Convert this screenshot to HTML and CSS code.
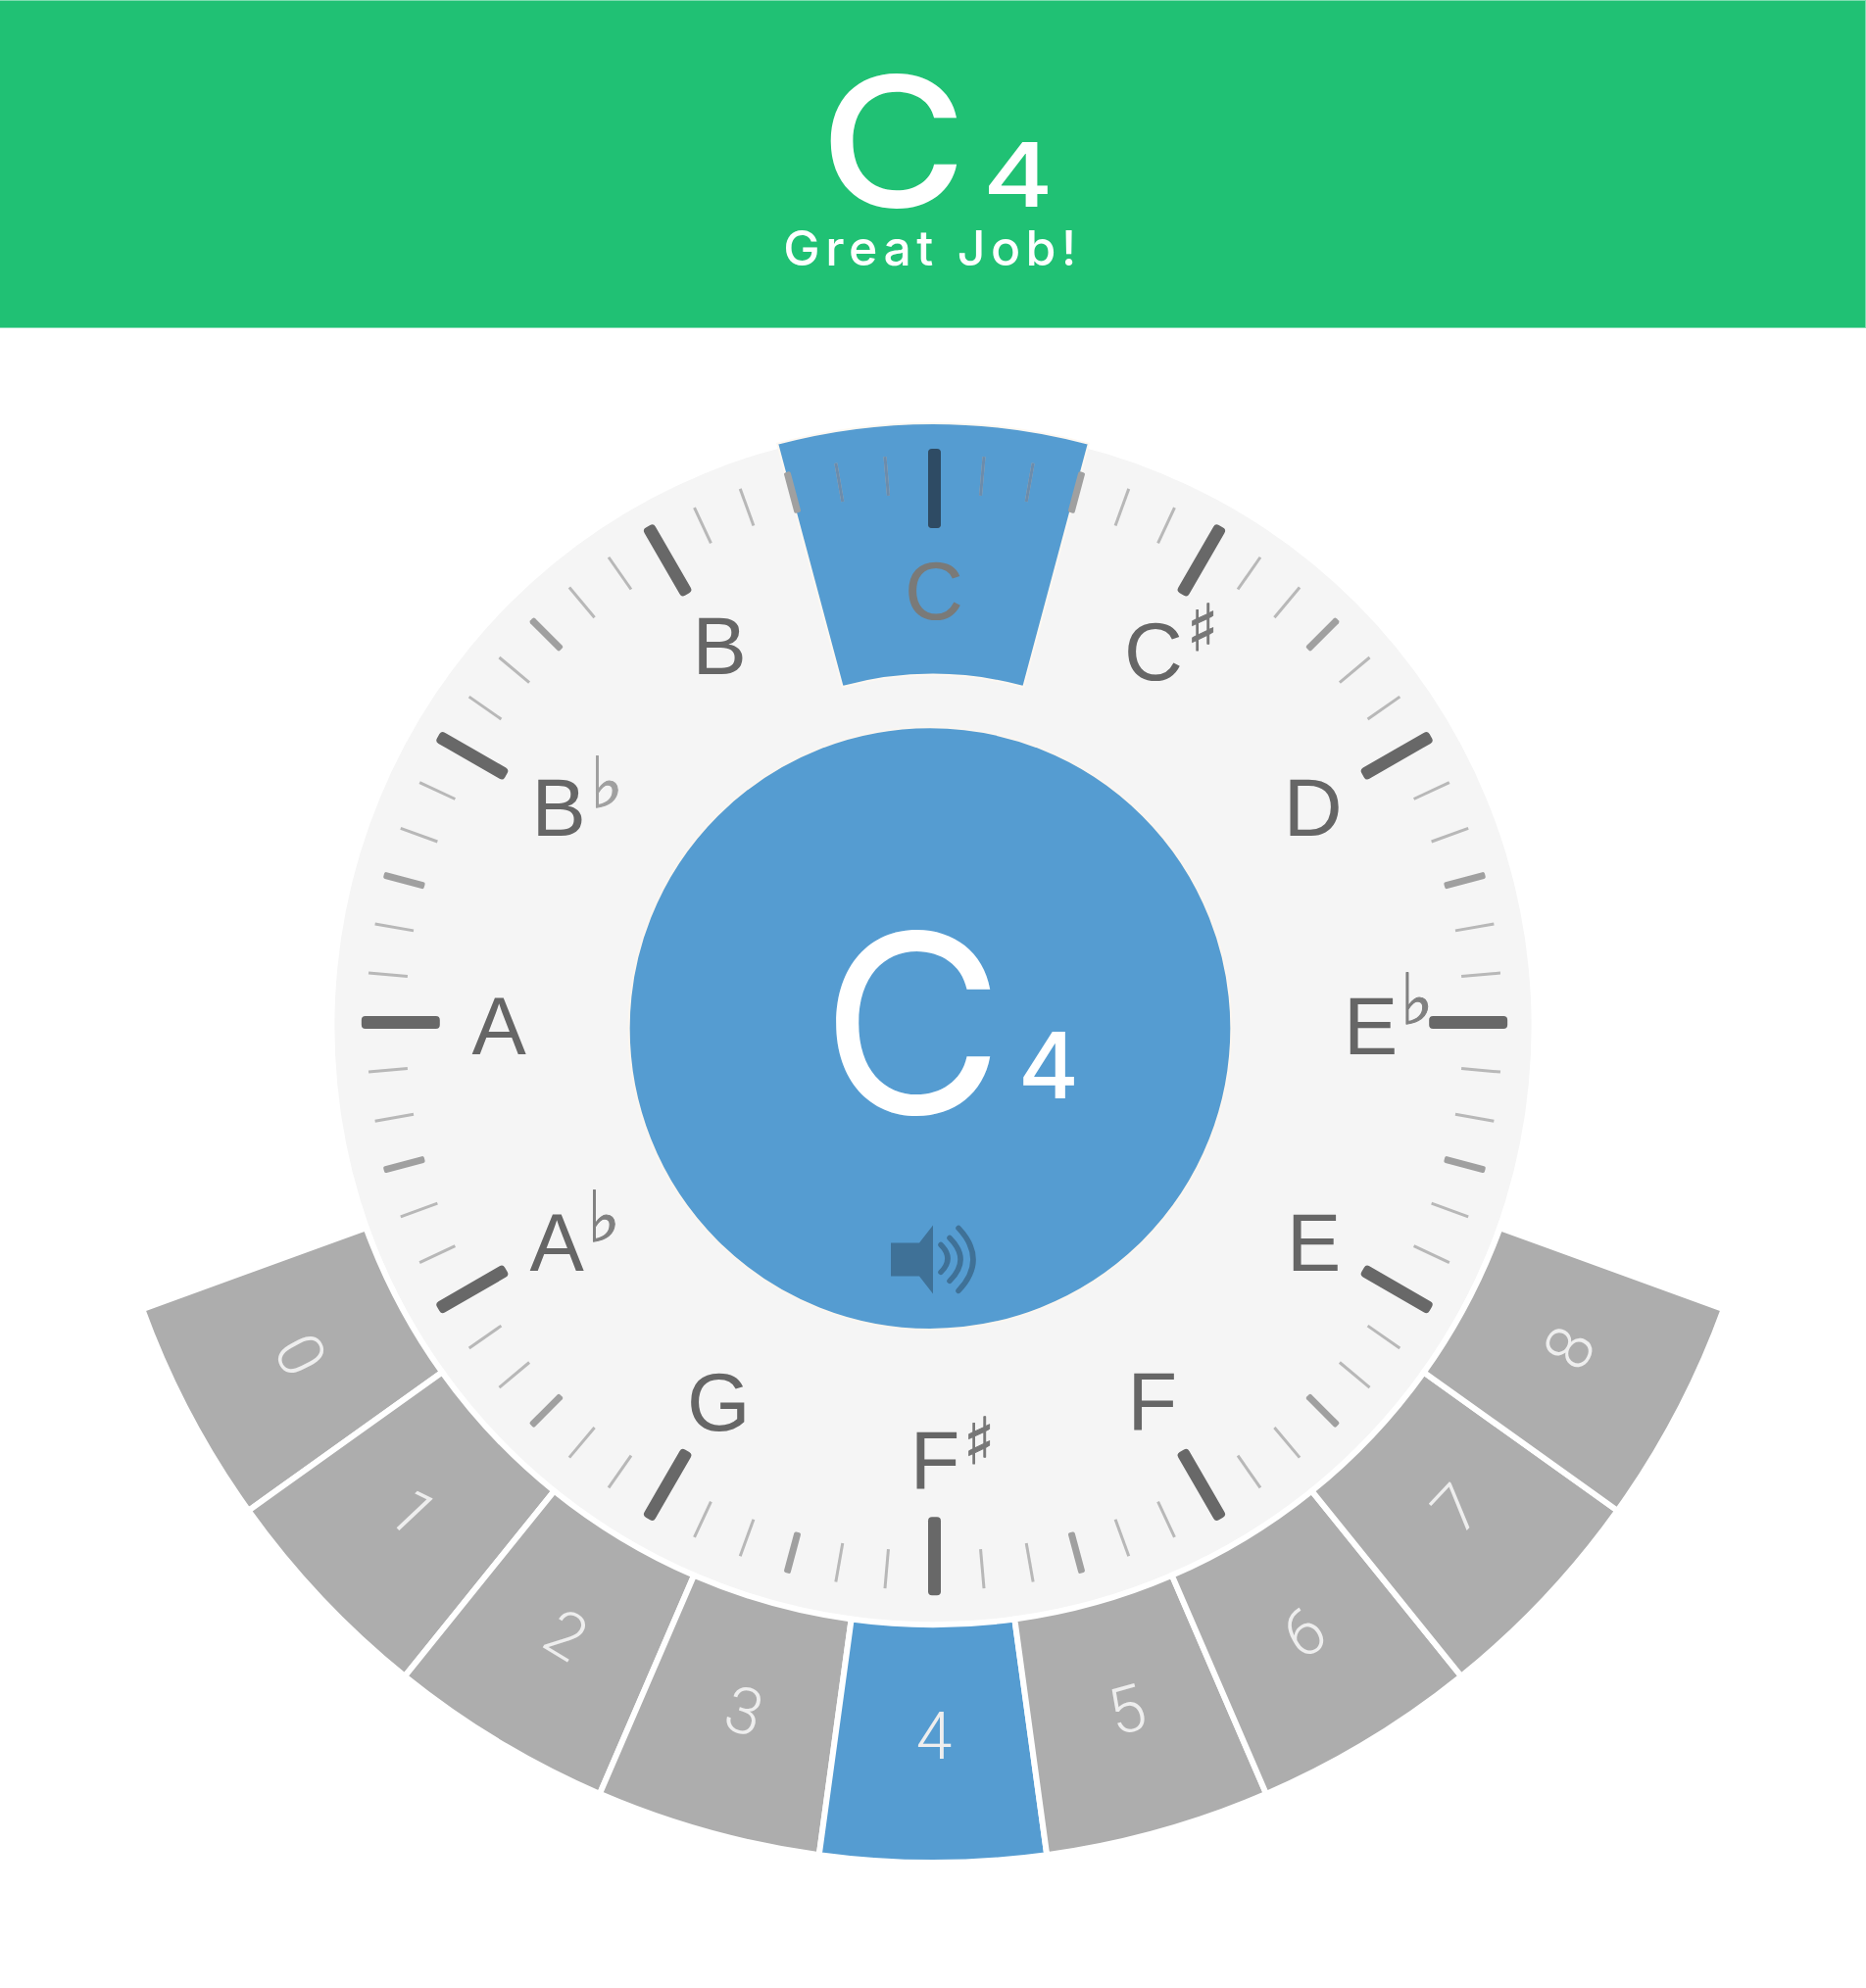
FILE: index.html
```html
<!DOCTYPE html>
<html lang="en">
<head>
    <meta charset="UTF-8">
    <meta name="viewport" content="width=device-width, initial-scale=1.0">
    <title>Pitch Tuner</title>
    <link rel="stylesheet" href="styles.css">
</head>
<body>
    <header id="Result">
        <div class="resultNote"><span class="resultLetter">C</span><span class="resultOctave">4</span></div>
        <p class="resultText">Great Job!</p>
    </header>

    <main id="Tuner">
        <svg class="dial" viewBox="-952 -711 1904 1695" role="img" aria-label="Pitch wheel">
            <defs>
                <!-- one 30 degree slice of the scale, repeated round the dial -->
                <g id="slice">
                    <rect class="tickMajor" x="-6.5" y="-585" width="13" height="80" rx="4"/>
                    <rect class="tickThin" x="-1.5" y="-580" width="3" height="40" transform="rotate(5)"/>
                    <rect class="tickThin" x="-1.5" y="-580" width="3" height="40" transform="rotate(10)"/>
                    <rect class="tickMid" x="-3.5" y="-582" width="7" height="43" rx="2" transform="rotate(15)"/>
                    <rect class="tickThin" x="-1.5" y="-580" width="3" height="40" transform="rotate(20)"/>
                    <rect class="tickThin" x="-1.5" y="-580" width="3" height="40" transform="rotate(25)"/>
                </g>
                <path id="octaveWedge" d="M-83.4 610.3A616 616 0 0 0 83.4 610.3L116.3 851.1A859 859 0 0 1 -116.3 851.1Z"/>
            </defs>

            <circle class="dialFace" cx="0" cy="2" r="611"/>
            <path class="noteActive" d="M-158.9 -593.1A614 614 0 0 1 158.9 -593.1L92.4 -344.8A357 357 0 0 0 -92.4 -344.8Z"/>

            <g transform="translate(1.5 -2)">
                <use href="#slice"/>
                <use href="#slice" transform="rotate(30)"/>
                <use href="#slice" transform="rotate(60)"/>
                <use href="#slice" transform="rotate(90)"/>
                <use href="#slice" transform="rotate(120)"/>
                <use href="#slice" transform="rotate(150)"/>
                <use href="#slice" transform="rotate(180)"/>
                <use href="#slice" transform="rotate(210)"/>
                <use href="#slice" transform="rotate(240)"/>
                <use href="#slice" transform="rotate(270)"/>
                <use href="#slice" transform="rotate(300)"/>
                <use href="#slice" transform="rotate(330)"/>

                <!-- ticks sitting on the blue slice are darker -->
                <rect class="tickOnBlue" x="-6.5" y="-586" width="13" height="81" rx="4"/>
                <rect class="tickThinOnBlue" x="-1.5" y="-580" width="3" height="40" transform="rotate(5)"/>
                <rect class="tickThinOnBlue" x="-1.5" y="-580" width="3" height="40" transform="rotate(10)"/>
                <rect class="tickThinOnBlue" x="-1.5" y="-580" width="3" height="40" transform="rotate(-5)"/>
                <rect class="tickThinOnBlue" x="-1.5" y="-580" width="3" height="40" transform="rotate(-10)"/>
            </g>

            <text class="noteName noteNameActive" x="1" y="-414">C</text>
            <text class="noteName" x="225" y="-352">C</text>
            <text class="noteName" x="388" y="-193">D</text>
            <text class="noteName" x="447" y="30">E</text>
            <text class="noteName" x="389" y="252">E</text>
            <text class="noteName" x="224" y="414">F</text>
            <text class="noteName" x="2" y="474">F</text>
            <text class="noteName" x="-219" y="415">G</text>
            <text class="noteName" x="-384" y="252">A</text>
            <text class="noteName" x="-443" y="30">A</text>
            <text class="noteName" x="-382" y="-193">B</text>
            <text class="noteName" x="-218" y="-358">B</text>

            <text class="accidental" x="275" y="-382">♯</text>
            <text class="accidental" x="47" y="449">♯</text>
            <text class="accidental accidentalFlat" x="494" y="-1">♭</text>
            <text class="accidental accidentalFlat" x="-336" y="222">♭</text>
            <text class="accidental accidentalFlat accidentalPale" x="-333" y="-222">♭</text>

            <circle class="noteCenter" cx="-3" cy="4" r="307.5"/>
            <text class="centerLetter" x="-21" y="91">C</text>
            <text class="centerOctave" x="118" y="75" textLength="62" lengthAdjust="spacingAndGlyphs">4</text>

            <g class="speaker">
                <path class="speakerBody" d="M-43 223H-14L0 205V275L-14 257H-43Z"/>
                <path class="speakerWave" d="M8 225Q22 239 8 253"/>
                <path class="speakerWave" d="M17 218Q39 240 17 262"/>
                <path class="speakerWave" d="M26 208Q56 240 26 272"/>
            </g>

            <g transform="translate(0 -3)">
                <g transform="rotate(62.22)"><use class="octave" href="#octaveWedge"/><text class="octaveName" y="753">0</text></g>
                <g transform="rotate(46.67)"><use class="octave" href="#octaveWedge"/><text class="octaveName" y="753">1</text></g>
                <g transform="rotate(31.11)"><use class="octave" href="#octaveWedge"/><text class="octaveName" x="3" y="753">2</text></g>
                <g transform="rotate(15.56)"><use class="octave" href="#octaveWedge"/><text class="octaveName" x="3" y="753">3</text></g>
                <g><use class="octave octaveActive" href="#octaveWedge"/><text class="octaveName" x="1" y="753">4</text></g>
                <g transform="rotate(-15.56)"><use class="octave" href="#octaveWedge"/><text class="octaveName" x="2" y="753">5</text></g>
                <g transform="rotate(-31.11)"><use class="octave" href="#octaveWedge"/><text class="octaveName" x="2" y="753">6</text></g>
                <g transform="rotate(-46.67)"><use class="octave" href="#octaveWedge"/><text class="octaveName" x="5" y="753">7</text></g>
                <g transform="rotate(-62.22)"><use class="octave" href="#octaveWedge"/><text class="octaveName" x="8" y="753">8</text></g>
            </g>
        </svg>
    </main>
</body>
</html>
```

FILE: styles.css
```css
body {
    margin: 0;
    background-color: #ffffff;
    font-family: Inter, "Liberation Sans", sans-serif;
}

#Result {
    height: 335px;
    box-sizing: border-box;
    padding-top: 58px;
    background-color: #20c174;
    border-top: 1px solid #7fdcb0;
    border-right: 1px solid #7fdcb0;
    border-bottom: 1px solid #7fdcb0;
    color: #ffffff;
    display: flex;
    flex-direction: column;
    align-items: center;
}
.resultNote {
    display: flex;
    align-items: baseline;
    gap: 30px;
    height: 166px;
    line-height: 170px;
    margin-left: 10px;
}
.resultLetter {
    font-size: 184px;
    font-weight: 500;
    transform: scaleX(1.11);
}
.resultOctave {
    font-size: 91px;
    font-weight: 500;
    transform: scaleX(1.2);
}
.resultText {
    margin: 0;
    font-size: 50px;
    line-height: 56px;
    font-weight: 500;
    letter-spacing: 5.5px;
}

.dial {
    display: block;
    width: 1904px;
    height: 1694px;
}
.dialFace {
    fill: #f5f5f5;
}
.noteActive {
    fill: #559cd1;
    stroke: #fdf8f2;
    stroke-width: 2;
}
.noteCenter {
    fill: #559cd1;
    stroke: #fbf6f0;
    stroke-width: 2;
}

.tickMajor {
    fill: #686868;
}
.tickMid {
    fill: #a0a0a0;
}
.tickThin {
    fill: #b8b8b8;
}
.tickOnBlue {
    fill: #2e4b64;
}
.tickThinOnBlue {
    fill: #6c8cab;
}

.noteName {
    fill: #666666;
    font-family: "Liberation Sans", sans-serif;
    font-size: 83px;
    text-anchor: middle;
}
.noteNameActive {
    fill: #7a7a78;
}
.accidental {
    fill: #777777;
    stroke: #777777;
    stroke-width: 1;
    font-family: "DejaVu Sans", sans-serif;
    font-size: 66px;
    text-anchor: middle;
}
.accidentalFlat {
    fill: #808080;
    stroke: #808080;
    font-size: 72px;
}
.accidentalPale {
    fill: #a0a0a0;
    stroke: #a0a0a0;
}

.centerLetter {
    fill: #ffffff;
    font-size: 255px;
    font-weight: 400;
    text-anchor: middle;
}
.centerOctave {
    fill: #ffffff;
    font-size: 93px;
    font-weight: 500;
    text-anchor: middle;
}

.speakerBody {
    fill: #3f7197;
}
.speakerWave {
    fill: none;
    stroke: #3f7197;
    stroke-width: 5.5;
    stroke-linecap: round;
}

.octave {
    fill: #adadad;
    stroke: #ffffff;
    stroke-width: 6;
}
.octaveActive {
    fill: #559cd1;
}
.octaveName {
    fill: #eeeeee;
    font-family: Roboto, sans-serif;
    font-size: 66px;
    font-weight: 300;
    text-anchor: middle;
}
```
